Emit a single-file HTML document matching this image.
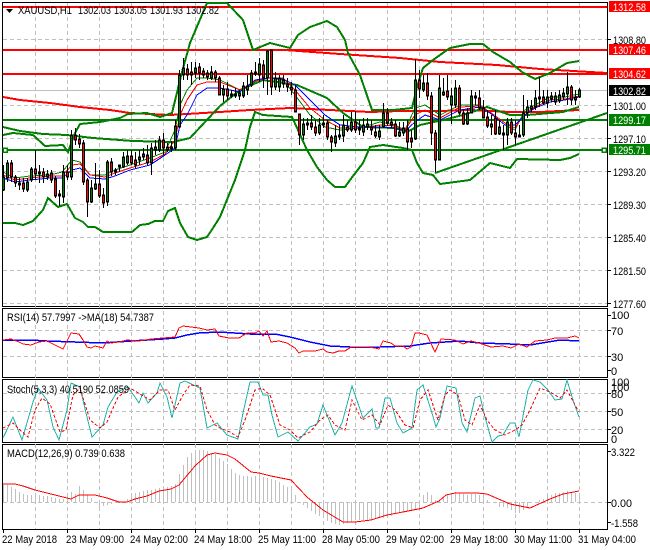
<!DOCTYPE html>
<html><head><meta charset="utf-8"><style>
html,body{margin:0;padding:0;background:#fff;width:650px;height:550px;overflow:hidden}
svg{display:block}
text{font-family:"Liberation Sans",sans-serif;font-size:11px;fill:#000}
.w{fill:#fff}
.n{fill:none}
polyline{shape-rendering:crispEdges}
</style></head><body>
<svg width="650" height="550" viewBox="0 0 650 550" xmlns="http://www.w3.org/2000/svg">
<defs>
<path id="ug" d="M3 178V189M7 164V177M27 183V189M31 170V179M39 173V173M47 175V176M59 195V195M63 173V196M71 136V176M91 189V201M95 185V188M107 163V201M115 171V171M119 166V166M123 158V166M127 157V162M139 158V159M143 155V156M151 149V162M155 148V149M159 141V149M167 148V149M171 148V148M175 127V147M179 76V126M183 69V74M195 69V72M211 73V77M223 90V94M231 95V95M235 95V95M239 94V95M243 87V95M247 87V89M251 74V84M255 73V73M259 65V74M267 52V77M275 79V86M279 79V86M283 81V83M303 125V134M307 124V124M319 126V132M323 124V124M335 137V142M343 126V135M351 123V129M359 129V129M363 126V131M367 125V126M379 132V136M383 114V126M399 133V135M403 129V132M415 81V138M423 84V89M439 89V159M443 93V94M451 97V104M455 89V104M467 114V123M471 97V112M475 97V97M491 125V126M499 128V133M503 134V134M507 123V134M519 136V136M523 114V134M527 108V112M531 107V108M535 99V106M539 98V98M547 98V102M551 97V98M555 97V101M559 96V100M563 94V96M567 88V93M575 98V99M579 91V96"/>
<path id="dn" d="M11 164V176M15 178V182M19 184V184M23 184V188M35 170V173M43 173V176M51 174V179M55 180V195M67 173V176M75 136V139M79 140V143M83 144V181M87 181V201M99 185V195M103 196V202M111 163V171M131 157V162M135 161V164M147 156V162M163 141V147M187 70V74M191 73V74M199 68V72M203 72V74M207 74V76M215 73V77M219 79V94M227 90V95M263 66V77M271 51V86M287 85V86M291 88V89M295 91V111M299 115V134M311 124V126M315 128V132M327 124V136M331 138V141M339 136V136M347 128V129M355 123V129M371 128V129M375 133V135M387 114V122M391 123V124M395 125V135M407 130V141M411 139V141M419 81V88M427 84V95M431 97V132M435 134V159M447 92V96M459 89V112M463 114V123M479 99V107M483 109V117M487 118V125M495 119V133M511 123V132M515 134V136M543 98V102M571 88V99"/>
</defs>

<!-- panels -->
<g fill="none" stroke="#000" stroke-width="1" shape-rendering="crispEdges">
<path d="M2.5 2.5H607.5V306.5H2.5Z" stroke-width="1"/>
<path d="M2.5 308.5H607.5V377.5H2.5Z"/>
<path d="M2.5 379.5H607.5V442.5H2.5Z"/>
<path d="M2.5 444.5H607.5V529.5H2.5Z"/>
</g>

<!-- grid -->
<g fill="none" stroke="#c0c0c0" stroke-width="1" stroke-dasharray="4 3" shape-rendering="crispEdges">
<path d="M3 39.5H607M3 105.5H607M3 138.5H607M3 171.5H607M3 204.5H607M3 237.5H607M3 270.5H607M3 303.5H607"/>
<path d="M3 330.5H607M3 356.5H607M3 393.5H607M3 411.5H607M3 429.5H607M3 502.5H607"/>
<path d="M35.5 3V529M67.5 3V529M99.5 3V529M131.5 3V529M163.5 3V529M195.5 3V529M227.5 3V529M259.5 3V529M291.5 3V529M323.5 3V529M355.5 3V529M387.5 3V529M419.5 3V529M451.5 3V529M483.5 3V529M515.5 3V529M547.5 3V529M579.5 3V529"/>
</g>

<!-- price line -->
<path d="M3 90.5H607" stroke="#c0c0c0" stroke-width="1" shape-rendering="crispEdges"/>

<!-- horizontal objects -->
<g stroke="#f00" stroke-width="2" shape-rendering="crispEdges">
<path d="M3 7H607M3 50H607M3 74H607"/>
</g>
<g stroke="#008000" stroke-width="2" shape-rendering="crispEdges">
<path d="M3 120H607M3 150H607"/>
</g>

<!-- thick MA lines -->
<polyline class="n" stroke="#f00" stroke-width="2" points="3,97 20,100 50,103 80,107 110,110 130,113 170,115 220,112 250,110 290,108 330,110 370,112 400,111 440,111 470,110 510,112 540,112 579,110"/>
<polyline class="n" stroke="#f00" stroke-width="2" points="285,50 340,54 400,58 440,62 497,65 540,69 607,73"/>
<polyline class="n" stroke="#008000" stroke-width="2" points="435,173 607,113"/>

<!-- Bollinger -->
<g fill="none" stroke="#008000" stroke-width="2">
<polyline points="3,135 13,133 33,135 45,146 63,145 68,152 75,133 80,124 100,122 120,118 128,114 147,113 160,117 172,113 182,72 190,43 207,3 227,3 243,20 253,50 265,45 270,43 290,48 298,35 310,27 327,21 337,27 345,40 348,53 360,75 372,110 393,110 412,108 417,87 423,68 433,60 440,55 450,48 470,44 483,44 493,52 510,62 522,72 535,79 550,73 567,63 579,61"/>
<polyline points="3,127 20,131 43,134 67,135 93,138 133,141 173,142 190,138 220,106 240,90 263,80 297,85 327,98 343,113 363,127 395,128 407,132 420,125 443,120 463,115 487,107 510,115 527,115 563,112 579,107"/>
<polyline points="3,223 15,223 23,225 33,221 43,210 48,198 58,207 67,204 75,218 83,222 88,227 95,227 103,232 132,232 140,225 148,224 155,221 163,221 168,211 175,208 180,223 188,237 197,240 207,237 213,228 220,217 235,180 245,150 250,127 255,112 263,115 292,117 298,130 307,150 317,167 327,180 335,187 345,187 350,180 363,163 370,147 383,145 403,148 412,150 417,163 423,173 433,175 440,184 470,180 490,163 510,168 517,159 560,160 570,158 579,154"/>
</g>

<!-- fast MAs -->
<g fill="none" stroke-width="1">
<polyline stroke="#008000" points="3,172 15,178 30,176 50,175 62,172 72,160 80,162 90,175 105,175 115,170 130,165 150,158 165,152 175,130 180,105 187,90 197,78 207,78 220,80 240,90 258,80 268,78 283,80 295,95 310,115 325,127 340,130 360,128 380,122 395,125 405,130 415,108 425,105 440,115 460,105 480,105 490,113 505,125 515,130 525,110 535,105 550,97 565,97 579,94"/>
<polyline stroke="#f00" points="3,175 15,180 30,178 50,176 62,176 72,165 80,164 90,175 105,177 115,173 130,168 150,162 165,154 175,140 180,115 187,100 197,85 207,82 220,82 240,90 255,81 268,78 283,78 295,90 310,108 325,120 340,128 360,128 380,125 395,126 405,130 415,115 425,110 440,118 460,107 480,106 490,112 505,123 515,128 525,113 535,107 550,100 565,99 579,96"/>
<polyline stroke="#00f" points="3,178 15,182 30,180 50,178 62,178 72,170 80,168 90,178 105,179 115,176 130,170 150,165 165,155 175,148 180,125 187,115 197,95 207,88 220,88 240,92 255,80 268,78 283,79 295,85 310,100 325,115 340,125 360,127 380,127 395,128 405,131 415,122 425,115 440,120 460,110 480,107 490,113 505,125 515,125 525,115 535,108 550,102 565,100 579,97"/>
</g>

<!-- candles -->
<g fill="none" shape-rendering="crispEdges">
<path transform="translate(.5 0)" stroke="#000" stroke-width="1" d="M3 165V191M7 160V182M11 160V182M15 175V187M19 178V190M23 178V192M27 178V192M31 167V182M35 150V180M39 165V183M43 168V183M47 170V180M51 170V183M55 176V198M59 190V206M63 165V203M67 165V180M71 130V180M75 128V145M79 134V148M83 140V185M87 178V217M91 180V203M95 163V190M99 170V198M103 188V208M107 160V206M111 158V176M115 168V175M119 165V172M123 152V168M127 150V165M131 150V165M135 152V168M139 150V165M143 148V160M147 145V165M151 143V175M155 140V155M159 136V152M163 133V155M167 143V152M171 141V152M175 120V150M179 70V128M183 58V80M187 64V80M191 62V85M195 62V78M199 63V80M203 68V78M207 70V80M211 66V80M215 70V82M219 76V95M223 85V102M227 82V100M231 90V98M235 88V98M239 90V100M243 82V98M247 75V95M251 70V87M255 62V76M259 58V82M263 60V88M267 50V95M271 50V95M275 72V90M279 75V92M283 75V88M287 78V92M291 82V95M295 85V112M299 114V145M303 118V140M307 118V130M311 115V130M315 120V136M319 118V135M323 115V128M327 120V140M331 135V152M335 125V147M339 125V140M343 115V142M347 120V132M351 112V132M355 111V133M359 120V135M363 118V136M367 118V130M371 120V135M375 125V138M379 125V140M383 103V128M387 108V126M391 118V128M395 120V137M399 122V137M403 122V136M407 120V150M411 130V148M415 59V140M419 70V98M423 75V92M427 73V100M431 92V145M435 130V172M439 75V160M443 78V96M447 75V100M451 88V124M455 80V108M459 85V115M463 110V125M467 108V125M471 90V113M475 92V105M479 90V110M483 100V118M487 110V128M491 115V135M495 110V135M499 120V135M503 125V150M507 118V145M511 118V135M515 120V145M519 125V135M523 95V137M527 100V118M531 100V112M535 90V110M539 77V107M543 90V105M547 90V108M551 92V102M555 92V105M559 90V103M563 88V100M567 72V105M571 85V105M575 90V105M579 88V98"/>
<g transform="translate(.5 0)">
<use href="#ug" stroke="#000" stroke-width="3" stroke-linecap="square"/>
<use href="#dn" stroke="#000" stroke-width="3" stroke-linecap="square"/>
<use href="#ug" stroke="#008000" stroke-width="1"/>
<use href="#dn" stroke="#f00" stroke-width="1"/>
</g>
</g>

<!-- handles -->
<g fill="#fff" stroke="#008000" stroke-width="1.5" shape-rendering="crispEdges">
<rect x="3" y="148" width="4" height="4"/>
<rect x="602" y="148" width="4" height="4"/>
</g>

<!-- header -->
<path d="M6 9H13L9.500 13Z" fill="#000"/>
<text x="18" y="14" textLength="54" lengthAdjust="spacingAndGlyphs">XAUUSD,H1</text>
<text x="78" y="14" textLength="33" lengthAdjust="spacingAndGlyphs">1302.03</text>
<text x="114" y="14" textLength="33" lengthAdjust="spacingAndGlyphs">1303.05</text>
<text x="150" y="14" textLength="33" lengthAdjust="spacingAndGlyphs">1301.93</text>
<text x="186" y="14" textLength="33" lengthAdjust="spacingAndGlyphs">1302.82</text>

<!-- RSI -->
<polyline class="n" stroke="#00f" stroke-width="1.5" points="3,340 30,340 47,341 75,342 103,343 131,341 163,339 175,338 187,335 199,333 219,332 250,334 275,334 290,337 310,342 330,346 350,347 380,347 410,346 430,343 460,341 480,343 510,344 530,345 560,340 579,341"/>
<polyline class="n" stroke="#f00" stroke-width="1" points="3,340 11,339 19,342 23,344 31,345 39,342 47,341 51,343 59,347 63,349 71,333 79,334 83,340 87,347 91,348 95,346 103,348 107,341 111,343 119,342 127,340 139,341 151,339 163,338 175,337 179,328 183,326 199,328 207,330 215,329 219,336 229,338 239,338 247,333 255,333 259,331 263,336 267,331 271,342 279,341 287,343 295,348 299,353 303,351 315,351 323,349 327,352 333,353 339,351 345,351 351,347 359,347 367,347 375,348 379,349 383,341 391,343 395,346 403,346 407,349 411,347 415,333 419,333 427,335 435,352 441,339 455,340 463,344 471,341 479,343 491,347 503,346 511,348 519,344 527,347 535,341 547,340 555,338 567,338 575,336 579,338"/>
<text x="7" y="321" textLength="147" lengthAdjust="spacingAndGlyphs">RSI(14) 57.7997  -&gt;MA(18) 54.7387</text>

<!-- Stoch -->
<polyline class="n" stroke="#20b2aa" stroke-width="1" points="3,438 13,417 22,440 33,402 38,388 47,400 53,427 59,440 67,410 71,383 80,387 86,413 92,437 103,425 108,407 117,392 128,387 139,403 143,393 148,403 157,393 160,383 167,397 172,418 180,383 185,381 200,388 207,428 217,423 227,435 238,439 243,413 250,382 258,382 263,395 268,395 272,415 278,437 288,432 298,441 310,427 317,424 323,405 335,435 342,423 352,386 363,418 372,409 376,428 379,428 385,398 390,398 397,423 403,433 412,428 417,390 423,385 432,413 436,427 440,418 447,386 456,388 462,423 467,432 475,398 480,396 485,417 492,442 498,436 503,435 510,423 515,423 519,437 528,390 533,380 540,382 548,390 555,400 562,399 567,380 573,400 579,417"/>
<polyline class="n" stroke="#f00" stroke-width="1" stroke-dasharray="3 2" points="3,428 13,423 20,430 28,437 35,410 42,398 50,404 60,432 66,430 73,395 80,388 90,420 100,428 107,422 118,397 130,388 140,394 150,400 160,390 168,390 175,410 183,395 190,385 200,386 207,410 215,425 220,428 230,432 238,437 245,420 255,390 262,388 270,395 280,425 290,430 298,438 310,432 320,420 328,415 335,425 345,430 352,400 362,420 372,415 380,425 388,405 395,410 405,425 413,428 420,400 428,390 438,420 445,395 450,390 458,395 465,420 472,425 480,405 487,420 495,430 505,435 515,430 522,425 530,410 540,388 550,392 560,398 567,390 575,405 579,412"/>
<text x="7" y="393" textLength="122" lengthAdjust="spacingAndGlyphs">Stoch(5,3,3) 40.5190 52.0859</text>

<!-- MACD -->
<path fill="none" stroke="#c0c0c0" stroke-width="1" shape-rendering="crispEdges" transform="translate(.5 0)" d="M3 502V485M7 502V485M11 502V487M15 502V489M19 502V492M23 502V494M27 502V495M31 502V495M35 502V495M39 502V495M43 502V496M47 502V496M51 502V497M55 502V498M59 502V499M63 502V499M67 502V496M71 502V492M75 502V494M79 502V486M83 502V490M87 502V495M91 502V498M95 502V502M99 502V507M103 502V506M107 502V505M111 502V504M115 502V503M119 502V503M123 502V503M127 502V499M131 502V494M135 502V493M139 502V492M143 502V491M147 502V490M151 502V490M155 502V489M159 502V488M163 502V487M167 502V487M171 502V486M175 502V484M179 502V474M183 502V465M187 502V457M191 502V453M195 502V450M199 502V450M203 502V450M207 502V451M211 502V453M215 502V454M219 502V458M223 502V461M227 502V464M231 502V469M235 502V473M239 502V475M243 502V476M247 502V476M251 502V477M255 502V476M259 502V476M263 502V477M267 502V478M271 502V479M275 502V480M279 502V482M283 502V485M287 502V487M291 502V489M295 502V495M299 502V502M303 502V505M307 502V508M311 502V511M315 502V514M319 502V516M323 502V518M327 502V521M331 502V523M335 502V524M339 502V525M343 502V524M347 502V523M351 502V522M355 502V520M359 502V520M363 502V520M367 502V520M371 502V519M375 502V519M379 502V518M383 502V518M387 502V517M391 502V516M395 502V514M399 502V513M403 502V512M407 502V511M411 502V511M415 502V510M419 502V510M423 502V495M427 502V492M431 502V495M435 502V500M439 502V500M443 502V497M447 502V495M451 502V493M455 502V492M459 502V493M463 502V494M467 502V495M471 502V494M475 502V494M479 502V495M483 502V497M487 502V500M491 502V502M495 502V503M499 502V507M503 502V507M507 502V508M511 502V510M515 502V513M519 502V513M523 502V510M527 502V507M531 502V503M535 502V502M539 502V500M543 502V499M547 502V497M551 502V495M555 502V493M559 502V493M563 502V492M567 502V491M571 502V492M575 502V493M579 502V493"/>
<polyline class="n" stroke="#f00" stroke-width="1" points="3,484 15,484 23,486 35,490 47,493 63,497 71,499 79,495 95,495 107,498 119,502 127,502 135,499 147,496 159,491 171,489 179,485 195,466 207,455 215,453 227,455 235,459 251,472 259,473 271,476 291,480 307,497 323,510 343,522 355,522 371,520 387,515 403,512 423,508 439,501 446,495 455,493 477,493 487,494 510,504 530,508 550,499 563,494 579,491"/>
<text x="7" y="457" textLength="118" lengthAdjust="spacingAndGlyphs">MACD(12,26,9) 0.739 0.638</text>

<!-- axis ticks -->
<path stroke="#000" stroke-width="1" shape-rendering="crispEdges" d="M607 39.500H611M607 105.500H611M607 138.500H611M607 171.500H611M607 204.500H611M607 237.500H611M607 270.500H611M607 303.500H611M607 315.500H611M607 330.500H611M607 356.500H611M607 370.500H611M607 393.500H611M607 411.500H611M607 429.500H611M607 451.500H611M607 502.500H611M607 522.500H611M3.500 529V533M67.500 529V533M131.500 529V533M195.500 529V533M259.500 529V533M323.500 529V533M387.500 529V533M451.500 529V533M515.500 529V533M579.500 529V533"/>

<!-- price labels -->
<rect x="609" y="1" width="41" height="11" fill="#f00"/>
<rect x="609" y="44" width="41" height="11" fill="#f00"/>
<rect x="609" y="68" width="41" height="11" fill="#f00"/>
<rect x="609" y="85" width="41" height="11" fill="#000"/>
<rect x="609" y="114" width="41" height="12" fill="#008000"/>
<rect x="609" y="144" width="41" height="11" fill="#008000"/>
<g>
<text class="w" x="613" y="11" textLength="33" lengthAdjust="spacingAndGlyphs">1312.58</text>
<text class="w" x="613" y="54" textLength="33" lengthAdjust="spacingAndGlyphs">1307.46</text>
<text class="w" x="613" y="78" textLength="33" lengthAdjust="spacingAndGlyphs">1304.62</text>
<text class="w" x="613" y="95" textLength="33" lengthAdjust="spacingAndGlyphs">1302.82</text>
<text class="w" x="613" y="124" textLength="33" lengthAdjust="spacingAndGlyphs">1299.17</text>
<text class="w" x="613" y="154" textLength="33" lengthAdjust="spacingAndGlyphs">1295.71</text>
</g>
<g>
<text x="613" y="44" textLength="33" lengthAdjust="spacingAndGlyphs">1308.80</text>
<text x="613" y="110" textLength="33" lengthAdjust="spacingAndGlyphs">1301.00</text>
<text x="613" y="143" textLength="33" lengthAdjust="spacingAndGlyphs">1297.10</text>
<text x="613" y="176" textLength="33" lengthAdjust="spacingAndGlyphs">1293.20</text>
<text x="613" y="209" textLength="33" lengthAdjust="spacingAndGlyphs">1289.30</text>
<text x="613" y="242" textLength="33" lengthAdjust="spacingAndGlyphs">1285.40</text>
<text x="613" y="275" textLength="33" lengthAdjust="spacingAndGlyphs">1281.50</text>
<text x="613" y="308" textLength="33" lengthAdjust="spacingAndGlyphs">1277.60</text>
<text x="611" y="319">100</text>
<text x="611" y="335">70</text>
<text x="611" y="361">30</text>
<text x="611" y="375">0</text>
<text x="611" y="386">100</text>
<text x="611" y="391">100</text>
<text x="611" y="398">80</text>
<text x="611" y="416">50</text>
<text x="611" y="434">20</text>
<text x="611" y="443">0</text>
<text x="611" y="456" textLength="24" lengthAdjust="spacingAndGlyphs">3.322</text>
<text x="611" y="507" textLength="21" lengthAdjust="spacingAndGlyphs">0.00</text>
<text x="611" y="527" textLength="27" lengthAdjust="spacingAndGlyphs">-1.558</text>
</g>
<g>
<text x="2" y="543" textLength="55" lengthAdjust="spacingAndGlyphs">22 May 2018</text>
<text x="66" y="543" textLength="58" lengthAdjust="spacingAndGlyphs">23 May 09:00</text>
<text x="130" y="543" textLength="58" lengthAdjust="spacingAndGlyphs">24 May 02:00</text>
<text x="194" y="543" textLength="58" lengthAdjust="spacingAndGlyphs">24 May 18:00</text>
<text x="258" y="543" textLength="58" lengthAdjust="spacingAndGlyphs">25 May 11:00</text>
<text x="322" y="543" textLength="58" lengthAdjust="spacingAndGlyphs">28 May 05:00</text>
<text x="386" y="543" textLength="58" lengthAdjust="spacingAndGlyphs">29 May 02:00</text>
<text x="450" y="543" textLength="58" lengthAdjust="spacingAndGlyphs">29 May 18:00</text>
<text x="514" y="543" textLength="58" lengthAdjust="spacingAndGlyphs">30 May 11:00</text>
<text x="578" y="543" textLength="58" lengthAdjust="spacingAndGlyphs">31 May 04:00</text>
</g>
</svg>
</body></html>
